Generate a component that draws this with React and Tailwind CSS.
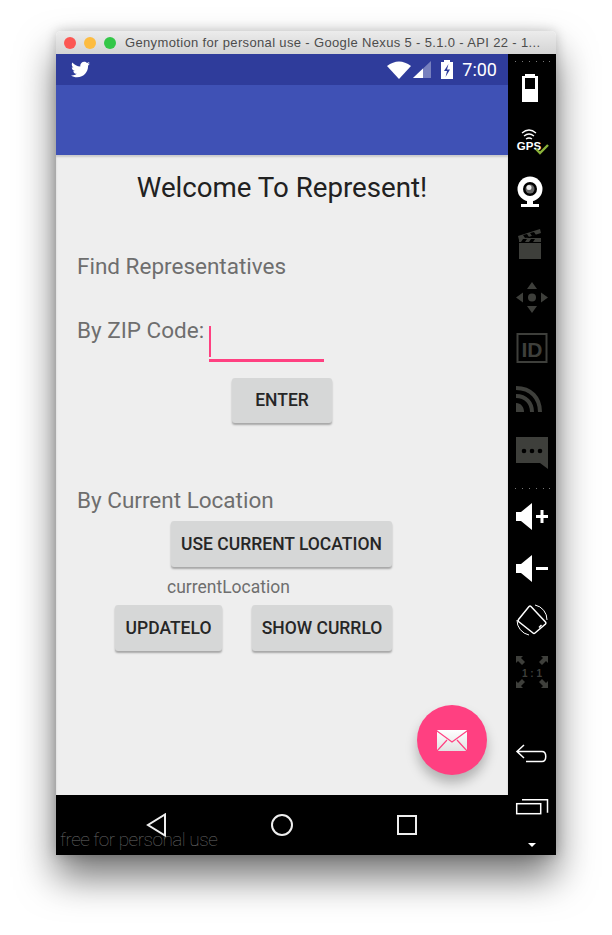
import React from 'react';
import { FaTwitter } from 'react-icons/fa';

const Btn = ({ children, className }) => (
  <div className={`flex items-center justify-center rounded-[3px] bg-[#d6d7d7] text-[17.500px] font-medium text-[#262626] shadow-[0_2px_2px_rgba(0,0,0,0.3)] ${className}`}>
    {children}
  </div>
);

const Dots = ({ className }) => (
  <svg width="48" height="4" className={className}>
    {[8, 15, 22, 29, 36].map(x => <rect key={x} x={x - 1} y="1" width="1" height="1" fill="#777" />)}
    <rect x="41" y="1" width="1" height="1" fill="#777" />
  </svg>
);

const SideBar = () => (
  <div className="flex w-[48px] flex-col bg-black">
    <Dots className="mt-[6px]" />
    {/* battery */}
    <svg width="48" height="30" className="mt-[9px]">
      <path d="M14 3h3V1h10v2h3v26H14z" fill="#fff" />
      <rect x="17" y="5" width="10" height="11" fill="#000" />
    </svg>
    {/* gps */}
    <svg width="48" height="30" className="mt-[23px]">
      <path d="M14 7q7-6 14 0M16 10q5-4 10 0M18 13q3-2 6 0" stroke="#fff" strokeWidth="1.3" fill="none" />
      <text x="21" y="24" textAnchor="middle" fontFamily="Liberation Sans" fontWeight="700" fontSize="11.5" fill="#fff">GPS</text>
      <path d="M28 23l4 4 8-8" stroke="#8bb33a" strokeWidth="2.4" fill="none" />
    </svg>
    {/* webcam */}
    <svg width="48" height="32" className="mt-[20px]">
      <circle cx="22" cy="13" r="12.5" fill="#fff" />
      <circle cx="22" cy="13" r="7" fill="#000" />
      <circle cx="22" cy="13" r="4.5" fill="#666" />
      <circle cx="21" cy="11.5" r="2.5" fill="#eee" />
      <rect x="19" y="25" width="6" height="3" fill="#fff" />
      <rect x="13" y="28" width="18" height="3" fill="#fff" />
    </svg>
    {/* clapper */}
    <svg width="48" height="31" className="mt-[20px]">
      <rect x="11" y="15" width="22" height="16" fill="#3e3f3b" />
      <path d="M11 10h22v4H11z" fill="#3e3f3b" />
      <path d="M10 8l22-7 1 4-22 7z" fill="#3e3f3b" />
      <path d="M15 7l4-1 2 3-4 1zM22 5l4-1 2 3-4 1zM15 11h4l-2 3h-4zM23 11h4l-2 3h-4z" fill="#000" />
    </svg>
    {/* dpad */}
    <svg width="48" height="33" className="mt-[22px]" fill="#3e3f3b">
      <path d="M24 1l5 7H19zM24 32l5-7H19zM8 16.500l7-5v10zM40 16.500l-7-5v10z" />
      <circle cx="24" cy="16.500" r="4" />
    </svg>
    {/* id */}
    <svg width="48" height="30" className="mt-[19px]">
      <rect x="9.500" y="1" width="29" height="28" stroke="#3e3f3b" strokeWidth="2" fill="none" />
      <text x="24" y="24" textAnchor="middle" fontFamily="Liberation Sans" fontWeight="700" fontSize="21" fill="#3e3f3b">ID</text>
    </svg>
    {/* rss */}
    <svg width="48" height="28" className="mt-[22px]" fill="none" stroke="#3e3f3b" strokeWidth="4">
      <path d="M8 3c15 0 24 10 24 24M8 11c10 0 16 7 16 16" />
      <path d="M8 18c5 0 8 4 8 9H8z" fill="#3e3f3b" stroke="none" />
    </svg>
    {/* sms */}
    <svg width="48" height="33" className="mt-[24px]">
      <path d="M8 0h32v32l-8-6H8z" fill="#3e3f3b" />
      <circle cx="16" cy="14" r="2.300" fill="#000" />
      <circle cx="24" cy="14" r="2.300" fill="#000" />
      <circle cx="32" cy="14" r="2.300" fill="#000" />
    </svg>
    <Dots className="mt-[17px]" />
    {/* volume up */}
    <svg width="48" height="27" className="mt-[12px]" fill="#fff">
      <path d="M8 9h5l11-9v27l-11-9H8z" />
      <path d="M28 12h4.500V7h3v5H40v3h-4.500v5h-3v-5H28z" />
    </svg>
    {/* volume down */}
    <svg width="48" height="27" className="mt-[25px]" fill="#fff">
      <path d="M8 9h5l11-9v27l-11-9H8z" />
      <rect x="28" y="12" width="12" height="3" />
    </svg>
    {/* rotate */}
    <svg width="48" height="33" className="mt-[21px]" fill="none" stroke="#fff">
      <path d="M10.500 16.500L21 3.500a1.500 1.500 0 0 1 2 0L37.500 19a1.500 1.500 0 0 1 0 2L27 30a1.500 1.500 0 0 1-2 0L10.500 18.500a1.500 1.500 0 0 1 0-2z" strokeWidth="1.500" />
      <path d="M31 24.500l2.500-2.500" strokeWidth="1.500" />
      <path d="M27 2A15 15 0 0 1 39 17M21 32A15 15 0 0 1 9 17" strokeWidth="1" />
    </svg>
    {/* 1:1 */}
    <svg width="48" height="34" className="mt-[19px]" fill="#3e3f3b">
      <path d="M8 1h7l-2 2 4 4-3 3-4-4-2 2zM40 1h-7l2 2-4 4 3 3 4-4 2 2zM8 33h7l-2-2 4-4-3-3-4 4-2-2zM40 33h-7l2-2-4-4 3-3 4 4 2-2z" />
      <text x="24" y="22" textAnchor="middle" fontFamily="Liberation Sans" fontWeight="700" fontSize="10" xmlSpace="preserve">1 : 1</text>
    </svg>
    {/* back */}
    <svg width="48" height="19" className="mt-[55px]" fill="none" stroke="#fff" strokeWidth="1.500">
      <path d="M16 1L9 7.500l7 6.500M9 7.500h25c5 0 5 10 0 10H18" />
    </svg>
    {/* recents */}
    <svg width="48" height="18" className="mt-[34px]" fill="none" stroke="#fff" strokeWidth="1.500">
      <rect x="8.700" y="6.700" width="24" height="10" />
      <path d="M14 2.700h25.500v13" />
    </svg>
    <svg width="48" height="6" className="mt-[27px]">
      <path d="M20 1h8l-4 4z" fill="#fff" />
    </svg>
  </div>
);

const StatusBar = () => (
  <div className="flex h-[31px] items-center bg-[#2f3c9b] pl-[15px] pr-[11px] text-white shadow-[0_1px_0_rgba(0,0,0,0.12)]">
    <FaTwitter size={19} />
    <div className="ml-auto flex items-center">
      <svg width="25" height="18" fill="#fff"><path d="M0 5q12-9 24 0L12 18z" /></svg>
      <svg width="19" height="18" className="ml-[1px]">
        <path d="M0 17L18 0v17z" fill="#fff" fillOpacity="0.35" />
        <path d="M0 17l10-9.500V17z" fill="#fff" />
      </svg>
      <svg width="12" height="19" className="ml-[9px]">
        <path d="M0 2h3V0h6v2h3v17H0z" fill="#fff" />
        <path d="M7.500 4L3 11h3l-1.500 6L9 9.500H6z" fill="#2f3c9b" />
      </svg>
      <span className="ml-[9px] font-['Roboto',sans-serif] text-[18px]">7:00</span>
    </div>
  </div>
);

const Main = () => (
  <div className="relative flex h-[640px] flex-col bg-[#eeeeee] shadow-[inset_0_2px_2px_rgba(0,0,0,0.15)]">
    <h1 className="mt-[17px] text-center text-[27.700px] leading-[32px] text-[#212121]">Welcome To Represent!</h1>
    <p className="ml-[21px] mt-[47px] text-[22.500px] leading-[30px] text-[#6e6e6e]">Find Representatives</p>
    <div className="ml-[21px] mt-[34px] flex h-[47px]">
      <span className="text-[22.500px] leading-[30px] text-[#6e6e6e]">By ZIP Code:</span>
      <div className="ml-[4.500px] h-[47px] w-[115px] border-b-[3px] border-[#ff4081] pt-[11px]">
        <div className="h-[31px] w-[2px] bg-[#ff4081]" />
      </div>
    </div>
    <Btn className="ml-[176px] mt-[16px] h-[45px] w-[100px]">ENTER</Btn>
    <p className="ml-[21px] mt-[62px] text-[22.500px] leading-[30px] text-[#6e6e6e]">By Current Location</p>
    <Btn className="ml-[115px] mt-[6px] h-[46px] w-[221px]">USE CURRENT LOCATION</Btn>
    <p className="ml-[111px] mt-[9px] text-[17.500px] leading-[22px] text-[#6e6e6e]">currentLocation</p>
    <div className="ml-[59px] mt-[7px] flex gap-[30px]">
      <Btn className="h-[46px] w-[107px]">UPDATELO</Btn>
      <Btn className="h-[46px] w-[140px]">SHOW CURRLO</Btn>
    </div>
    {/* fab */}
    <div className="absolute left-[361px] top-[550px] flex h-[70px] w-[70px] items-center justify-center rounded-full bg-[#ff4081] shadow-[0_8px_12px_rgba(0,0,0,0.25)]">
      <svg width="30" height="21">
        <defs>
          <linearGradient id="mail" x1="0" y1="0" x2="0" y2="1">
            <stop offset="0" stopColor="#ffffff" />
            <stop offset="1" stopColor="#e2e2e2" />
          </linearGradient>
        </defs>
        <rect width="30" height="21" rx="1" fill="url(#mail)" />
        <path d="M0 1l15 11L30 1M0 21l10-11M30 21L20 10" stroke="#ff4081" strokeWidth="1.200" fill="none" />
      </svg>
    </div>
  </div>
);

const NavBar = () => (
  <div className="relative flex h-[60px] justify-center bg-black pt-[18px]">
    <div className="grid h-[24px] grid-cols-[125px_125px_125px] justify-items-center">
      <svg width="24" height="24" fill="none" stroke="#eee" strokeWidth="2">
        <path d="M20 1.500v21L3 12z" />
      </svg>
      <svg width="24" height="24" fill="none" stroke="#eee" strokeWidth="2">
        <circle cx="12" cy="12" r="10" />
      </svg>
      <svg width="24" height="24" fill="none" stroke="#eee" strokeWidth="2">
        <rect x="3" y="3" width="18" height="18" />
      </svg>
    </div>
    <span className="absolute left-[4px] top-[32px] text-[19px] font-thin leading-[26px] tracking-[-0.5px] text-[#6a6a6a]">free for personal use</span>
  </div>
);

const App = () => (
  <div className="h-[935px] w-[612px] overflow-hidden bg-white pl-[56px] pt-[31px] font-['Roboto',sans-serif]">
    <div className="w-[500px] rounded-t-[5px] shadow-[0_22px_38px_rgba(0,0,0,0.55),0_0_12px_rgba(0,0,0,0.2)]">
      <div className="flex h-[23px] items-center rounded-t-[5px] bg-gradient-to-b from-[#ececec] to-[#d4d4d4] pl-[8px]">
        <span className="h-[12px] w-[12px] rounded-full bg-[#fc5753]" />
        <span className="ml-[8px] h-[12px] w-[12px] rounded-full bg-[#fdbc40]" />
        <span className="ml-[8px] h-[12px] w-[12px] rounded-full bg-[#33c748]" />
        <span className="ml-[9px] whitespace-nowrap font-['Liberation_Sans',sans-serif] text-[13px] tracking-[0.35px] text-[#4c4c4c]">Genymotion for personal use - Google Nexus 5 - 5.1.0 - API 22 - 1...</span>
      </div>
      <div className="flex rounded-b-[3px] bg-black">
        <div className="w-[452px]">
          <StatusBar />
          <div className="h-[70px] bg-[#3f51b5]" />
          <Main />
          <NavBar />
        </div>
        <SideBar />
      </div>
    </div>
  </div>
);

export default App;
